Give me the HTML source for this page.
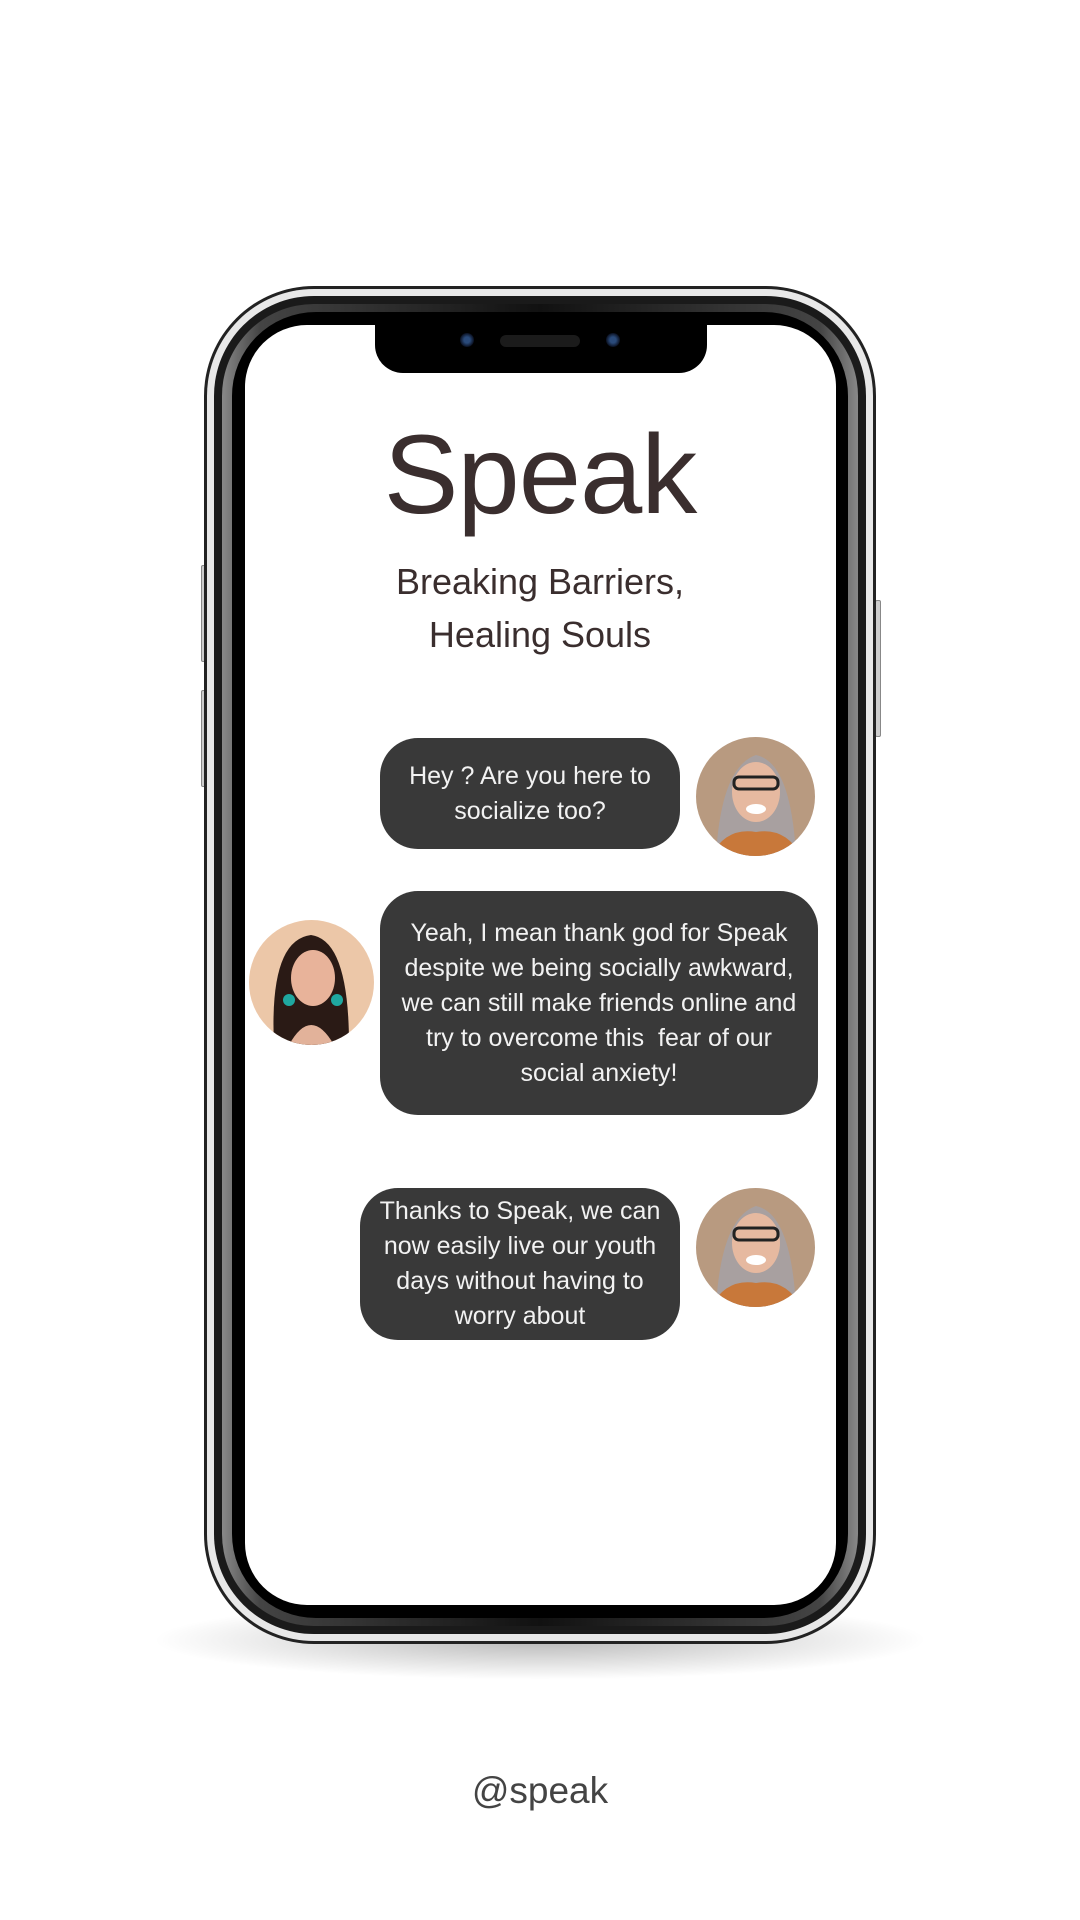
<!DOCTYPE html>
<html><head><meta charset="utf-8"><style>
html,body{margin:0;padding:0}
body{width:1080px;height:1920px;background:#fff;position:relative;overflow:hidden;font-family:"Liberation Sans",sans-serif}
.abs{position:absolute}
.shadow{left:150px;top:1600px;width:780px;height:80px;border-radius:50%;background:radial-gradient(ellipse at center,rgba(0,0,0,.28),rgba(0,0,0,0) 70%)}
.l1{left:204px;top:286px;width:672px;height:1358px;border-radius:110px;background:#222}
.l2{left:207px;top:289px;width:666px;height:1352px;border-radius:107px;background:#e8e8e8}
.l3{left:214px;top:296px;width:652px;height:1338px;border-radius:100px;background:#1a1a1a}
.l4{left:222px;top:304px;width:636px;height:1322px;border-radius:92px;background:linear-gradient(90deg,#888,#444 6%,#111 50%,#444 94%,#888)}
.l5{left:232px;top:312px;width:616px;height:1306px;border-radius:84px;background:#000}
.screen{left:245px;top:325px;width:591px;height:1280px;border-radius:62px;background:#fff}
.notch{left:375px;top:318px;width:332px;height:55px;background:#000;border-radius:0 0 28px 28px}
.cam{width:14px;height:14px;border-radius:50%;background:radial-gradient(circle,#2a4a7a 30%,#0a1020 70%);top:333px}
.spk{left:500px;top:335px;width:80px;height:12px;border-radius:6px;background:#1b1b1b}
.btn{background:#ccc;border:1px solid #888;border-radius:2px}
.title{left:0;width:1080px;top:410px;text-align:center;font-size:112px;color:#3a2e2e;letter-spacing:-1px;line-height:130px}
.sub{left:0;width:1080px;top:555px;text-align:center;font-size:36px;color:#3a2e2e;line-height:53px}
.b{background:#393939;color:#f2f2f2;border-radius:38px;font-size:25px;line-height:35px;text-align:center;display:flex;align-items:center;justify-content:center;box-sizing:border-box;padding:0 14px}
.av{border-radius:50%;overflow:hidden}
.at{left:0;width:1080px;top:1770px;text-align:center;font-size:37px;color:#444}
</style></head><body>
<div class="abs shadow"></div>
<div class="abs btn" style="left:201px;top:565px;width:4px;height:95px"></div>
<div class="abs btn" style="left:201px;top:690px;width:4px;height:95px"></div>
<div class="abs btn" style="left:875px;top:600px;width:4px;height:135px"></div>
<div class="abs l1"></div><div class="abs l2"></div><div class="abs l3"></div><div class="abs l4"></div><div class="abs l5"></div>
<div class="abs screen"></div>
<div class="abs notch"></div>
<div class="abs cam" style="left:460px"></div>
<div class="abs cam" style="left:606px"></div>
<div class="abs spk"></div>
<div class="abs title">Speak</div>
<div class="abs sub">Breaking Barriers,<br>Healing Souls</div>

<div class="abs b" style="left:380px;top:738px;width:300px;height:111px">Hey ? Are you here to<br>socialize too?</div>
<div class="abs b" style="left:380px;top:891px;width:438px;height:224px">Yeah, I mean thank god for Speak despite we being socially awkward, we can still make friends online and try to overcome this&nbsp; fear of our social anxiety!</div>
<div class="abs b" style="left:360px;top:1188px;width:320px;height:152px">Thanks to Speak, we can now easily live our youth days without having to worry about</div>

<svg class="abs av" style="left:696px;top:737px" width="119" height="119" viewBox="0 0 119 119"><rect width="119" height="119" fill="#b89a80"/><path d="M20 119 Q25 30 60 18 Q95 25 100 119Z" fill="#a8a0a0"/><path d="M15 119 Q30 90 60 95 Q90 90 105 119Z" fill="#c8783a"/><ellipse cx="60" cy="55" rx="24" ry="30" fill="#e6b9a0"/><rect x="38" y="40" width="44" height="12" rx="5" fill="none" stroke="#222" stroke-width="3"/><ellipse cx="60" cy="72" rx="10" ry="5" fill="#fff"/></svg>
<svg class="abs av" style="left:249px;top:920px" width="125" height="125" viewBox="0 0 125 125"><rect width="125" height="125" fill="#ecc7a8"/><path d="M25 125 Q20 20 62 15 Q100 20 100 125Z" fill="#2a1a15"/><ellipse cx="64" cy="58" rx="22" ry="28" fill="#e8b39a"/><path d="M40 125 Q62 85 85 125Z" fill="#e2b29a"/><circle cx="40" cy="80" r="6" fill="#1fa8a0"/><circle cx="88" cy="80" r="6" fill="#1fa8a0"/></svg>
<svg class="abs av" style="left:696px;top:1188px" width="119" height="119" viewBox="0 0 119 119"><rect width="119" height="119" fill="#b89a80"/><path d="M20 119 Q25 30 60 18 Q95 25 100 119Z" fill="#a8a0a0"/><path d="M15 119 Q30 90 60 95 Q90 90 105 119Z" fill="#c8783a"/><ellipse cx="60" cy="55" rx="24" ry="30" fill="#e6b9a0"/><rect x="38" y="40" width="44" height="12" rx="5" fill="none" stroke="#222" stroke-width="3"/><ellipse cx="60" cy="72" rx="10" ry="5" fill="#fff"/></svg>

<div class="abs at">@speak</div>
</body></html>
